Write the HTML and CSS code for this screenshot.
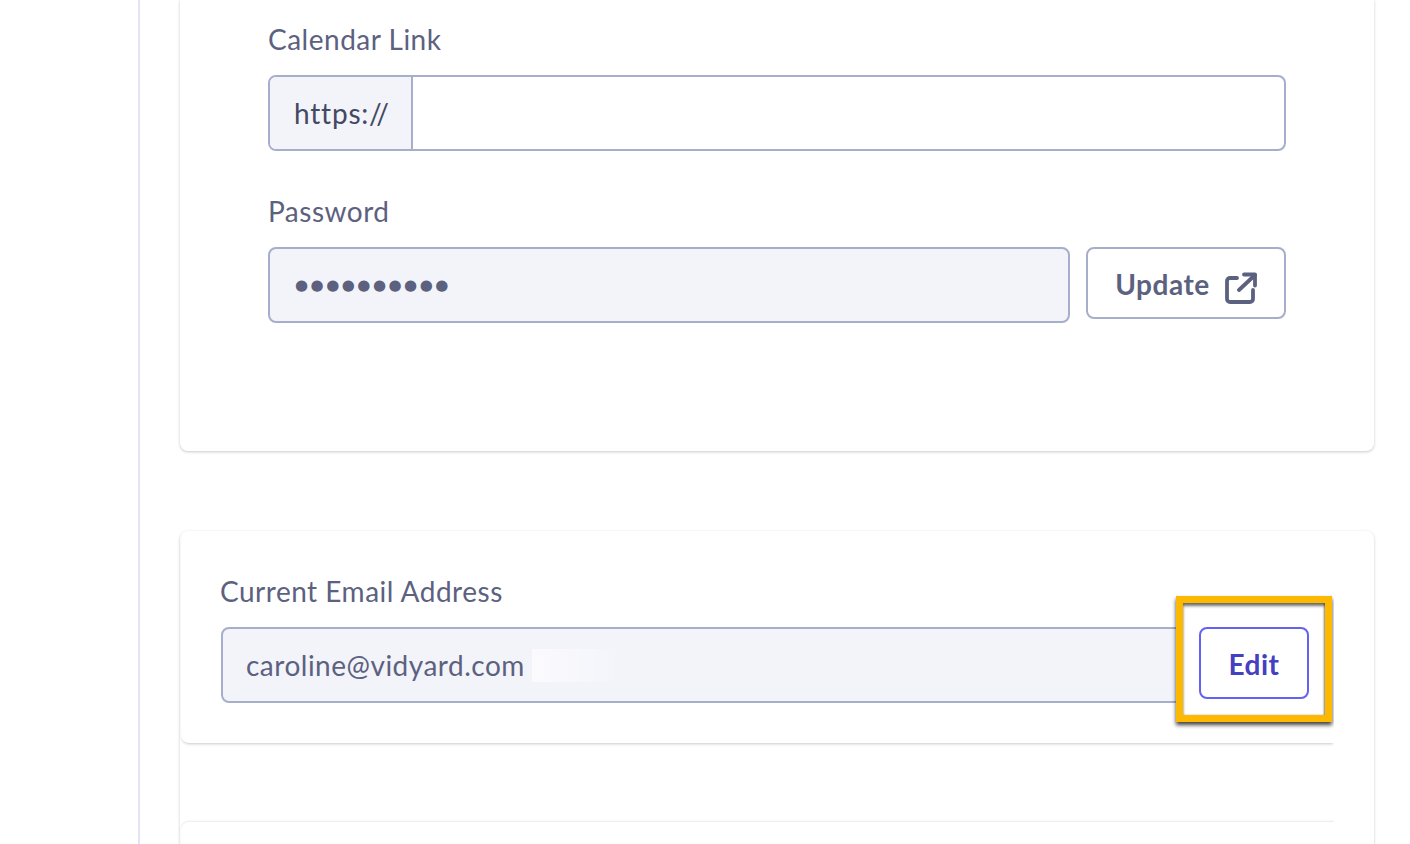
FILE: index.html
```html
<!DOCTYPE html>
<html lang="en">
<head>
    <meta charset="UTF-8">
    <meta name="viewport" content="width=device-width, initial-scale=1.0">
    <title>Account Settings</title>
    <link rel="stylesheet" href="styles.css">
</head>
<body>
    <div class="page">
        <div class="sidebar"></div>
        <div class="main">
            <div class="card card-profile">
                <div class="label">Calendar Link</div>
                <div class="input-group">
                    <span class="prefix">https://</span>
                    <span class="group-value"></span>
                </div>
                <div class="label label-next">Password</div>
                <div class="row">
                    <div class="input dots">●●●●●●●●●●</div>
                    <button class="button button-update">
                        Update
                        <svg class="icon" width="32" height="32" viewBox="0 0 32 32" fill="none" stroke="#5c6180" stroke-width="3.8" stroke-linecap="round" stroke-linejoin="round">
                            <path d="M12 6H5a3 3 0 0 0-3 3v18a3 3 0 0 0 3 3h20a3 3 0 0 0 3-3v-9"/>
                            <path d="M14 18L30 3"/>
                            <path d="M19 2.500h11v11"/>
                        </svg>
                    </button>
                </div>
            </div>
            <div class="card card-account">
                <div class="panel">
                    <div class="label label-email">Current Email Address</div>
                    <div class="row">
                        <div class="input input-email">caroline@vidyard.com<span class="smudge"></span></div>
                        <button class="button button-edit">Edit</button>
                    </div>
                    <div class="highlight"></div>
                </div>
                <div class="panel panel-next"></div>
            </div>
        </div>
    </div>
</body>
</html>
```

FILE: styles.css
```css
html, body {
    margin: 0;
    height: 844px;
    overflow: hidden;
    background: #fff;
}
body {
    font-family: Lato, "Open Sans", sans-serif;
    font-size: 28px;
    letter-spacing: 0.5px;
    color: #5c6180;
}
.page {
    display: flex;
    height: 844px;
}
.sidebar {
    width: 138px;
    border-right: 2px solid #e2e4f4;
    flex-shrink: 0;
}
.main {
    width: 1194px;
    margin-left: 40px;
}
.card {
    box-sizing: border-box;
    background: #fff;
    border-radius: 8px;
    box-shadow: 0 1px 3px rgba(40, 40, 60, 0.25);
}
.card-profile {
    height: 451px;
    padding: 22px 88px 0;
    border-top-left-radius: 0;
    border-top-right-radius: 0;
}
.card-account {
    height: 340px;
    margin-top: 80px;
    padding: 0 40px 0 1px;
}
.label {
    line-height: 34px;
    margin-bottom: 19px;
}
.label-next {
    margin-top: 43px;
}
.label-email {
    margin-left: -1px;
}
.input-group {
    display: flex;
    height: 76px;
    box-sizing: border-box;
    border: 2px solid #a7aecb;
    border-radius: 8px;
    overflow: hidden;
}
.prefix {
    width: 143px;
    box-sizing: border-box;
    padding-left: 24px;
    background: #f3f4fa;
    border-right: 2px solid #a7aecb;
    color: #434863;
    letter-spacing: 0.8px;
    line-height: 72px;
}
.group-value {
    flex: 1;
}
.row {
    display: flex;
    gap: 16px;
    align-items: flex-start;
}
.input {
    flex: 1;
    display: flex;
    align-items: center;
    height: 76px;
    box-sizing: border-box;
    padding-left: 25px;
    background: #f3f4fa;
    border: 2px solid #a7aecb;
    border-radius: 8px;
}
.input-email {
    padding-left: 23px;
}
.dots {
    font-family: "DejaVu Sans", sans-serif;
    font-size: 15px;
    letter-spacing: 2.500px;
}
.smudge {
    width: 88px;
    height: 33px;
    margin-left: 7px;
    background: linear-gradient(90deg, #fbfbfe, #f3f4fa);
}
.button {
    box-sizing: border-box;
    display: flex;
    align-items: center;
    justify-content: center;
    background: #fff;
    border-radius: 8px;
    font-family: inherit;
    font-size: 28px;
    letter-spacing: 0.5px;
    font-weight: 700;
    padding: 2px 0 0;
}
.button-update {
    width: 200px;
    height: 72px;
    gap: 15px;
    border: 2px solid #a7aecb;
    color: #5c6180;
}
.icon {
    margin-top: 7px;
}
.button-edit {
    width: 110px;
    height: 72px;
    border: 2px solid #6461f5;
    color: #4540c0;
}
.panel {
    position: relative;
    box-sizing: border-box;
    height: 212px;
    padding: 43px 25px 0 40px;
    border-radius: 8px 0 0 8px;
    box-shadow: 0 2px 3px -1px rgba(40, 40, 60, 0.25);
    clip-path: inset(0 0 -6px -6px);
}
.panel-next {
    height: 60px;
    margin-top: 79px;
    box-shadow: 0 -1px 2px rgba(40, 40, 60, 0.1);
    clip-path: inset(-6px 0 0 -6px);
}
.highlight {
    position: absolute;
    left: 995px;
    top: 65px;
    width: 156px;
    height: 126px;
    box-sizing: border-box;
    border: 7px solid #fdb900;
    box-shadow: 0 3px 4px rgba(0, 0, 0, 0.75), inset 0 3px 3px rgba(0, 0, 0, 0.55), inset -1px 0 2px rgba(0, 0, 0, 0.3);
}
```
